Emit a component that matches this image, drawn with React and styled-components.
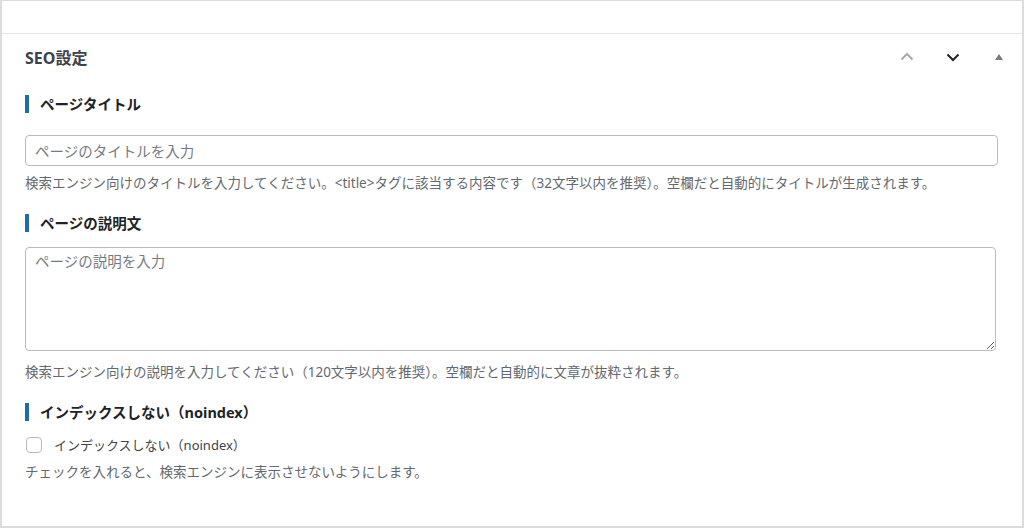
import styled, { createGlobalStyle } from 'styled-components';

const GlobalStyle = createGlobalStyle`
  html, body {
    margin: 0;
    padding: 0;
    background: #fff;
  }
  body {
    font-family: "Noto Sans", "Noto Sans CJK JP", sans-serif;
    color: #1d2327;
  }
`;

const ChevronUp = ({ color }) => (
  <svg width="16" height="16" viewBox="0 0 16 16" fill="none">
    <path d="M2.5 10.5 L8 5 L13.5 10.5" stroke={color} strokeWidth="2" />
  </svg>
);

const ChevronDown = ({ color }) => (
  <svg width="16" height="16" viewBox="0 0 16 16" fill="none">
    <path d="M2.5 5.5 L8 11 L13.5 5.5" stroke={color} strokeWidth="2" />
  </svg>
);

const Triangle = () => (
  <svg width="10" height="8" viewBox="0 0 10 8">
    <path d="M1 7 L5 1 L9 7 Z" fill="#787c82" />
  </svg>
);

const App = () => {
  return (
    <>
      <GlobalStyle />
      <Frame>
        <TopStrip />
        <Postbox>
          <PostboxHeader>
            <h2>SEO設定</h2>
            <Handles>
              <HandleButton><ChevronUp color="#a7aaad" /></HandleButton>
              <HandleButton><ChevronDown color="#1d2327" /></HandleButton>
              <HandleButton><Triangle /></HandleButton>
            </Handles>
          </PostboxHeader>
          <Inside>
            <Field>
              <FieldTitle $gap={22}>ページタイトル</FieldTitle>
              <TextInput type="text" placeholder="ページのタイトルを入力" />
              <Description $gap={7}>
                検索エンジン向けのタイトルを入力してください。&lt;title&gt;タグに該当する内容です（32文字以内を推奨）。空欄だと自動的にタイトルが生成されます。
              </Description>
            </Field>
            <Field>
              <FieldTitle $gap={15}>ページの説明文</FieldTitle>
              <TextArea placeholder="ページの説明を入力" />
              <Description $gap={11}>
                検索エンジン向けの説明を入力してください（120文字以内を推奨）。空欄だと自動的に文章が抜粋されます。
              </Description>
            </Field>
            <Field>
              <FieldTitle $gap={14}>インデックスしない（noindex）</FieldTitle>
              <CheckRow>
                <CheckBox type="checkbox" />
                <span>インデックスしない（noindex）</span>
              </CheckRow>
              <Description $gap={7}>
                チェックを入れると、検索エンジンに表示させないようにします。
              </Description>
            </Field>
          </Inside>
        </Postbox>
      </Frame>
    </>
  );
};
export default App;

const Frame = styled.div`
  box-sizing: border-box;
  width: 1024px;
  height: 528px;
  border: 1px solid #dcdcde;
  border-width: 1px 2px 2px 2px;
  display: flex;
  flex-direction: column;
  overflow: hidden;
`;

const TopStrip = styled.div`
  height: 32px;
  border-bottom: 1px solid #e6e6e8;
`;

const Postbox = styled.div`
  flex: 1;
  display: flex;
  flex-direction: column;
`;

const PostboxHeader = styled.div`
  display: flex;
  align-items: center;
  justify-content: space-between;
  height: 45px;
  padding: 0 10px 0 23px;

  h2 {
    margin: 0;
    font-size: 16px;
    font-weight: 700;
    color: #3c434a;
  }
`;

const Handles = styled.div`
  display: flex;
  align-items: center;
  gap: 20px;
`;

const HandleButton = styled.button`
  border: none;
  background: none;
  padding: 0;
  width: 26px;
  height: 26px;
  display: flex;
  align-items: center;
  justify-content: center;
  cursor: pointer;
`;

const Inside = styled.div`
  padding: 16px 24px 0 23px;
  display: flex;
  flex-direction: column;
  gap: 21px;
`;

const Field = styled.div`
  display: flex;
  flex-direction: column;
`;

const FieldTitle = styled.h3`
  margin: 0 0 ${(p) => p.$gap}px;
  border-left: 4px solid #1e6ea3;
  padding-left: 11px;
  font-size: 14.5px;
  font-weight: 700;
  line-height: 18px;
  color: #1d2327;
`;

const TextInput = styled.input`
  box-sizing: border-box;
  width: 100%;
  height: 31px;
  border: 1px solid #b8babd;
  border-radius: 4px;
  padding: 0 9px;
  font-family: inherit;
  font-size: 14.5px;
  color: #2c3338;

  &::placeholder {
    color: #787c82;
  }
`;

const TextArea = styled.textarea`
  box-sizing: border-box;
  display: block;
  width: calc(100% - 2px);
  height: 104px;
  border: 1px solid #b8babd;
  border-radius: 4px;
  padding: 3px 9px;
  font-family: inherit;
  font-size: 14.5px;
  line-height: 20px;
  color: #2c3338;
  resize: vertical;

  &::placeholder {
    color: #787c82;
  }
`;

const Description = styled.p`
  margin: ${(p) => p.$gap}px 0 0;
  font-size: 13.5px;
  line-height: 20px;
  color: #646970;
`;

const CheckRow = styled.label`
  display: flex;
  align-items: center;
  gap: 12px;
  font-size: 13px;
  line-height: 20px;
  color: #3c434a;
`;

const CheckBox = styled.input`
  appearance: none;
  box-sizing: border-box;
  margin: 0 0 0 1px;
  width: 16px;
  height: 16px;
  border: 1px solid #b8babd;
  border-radius: 4px;
  background: #fff;
`;
